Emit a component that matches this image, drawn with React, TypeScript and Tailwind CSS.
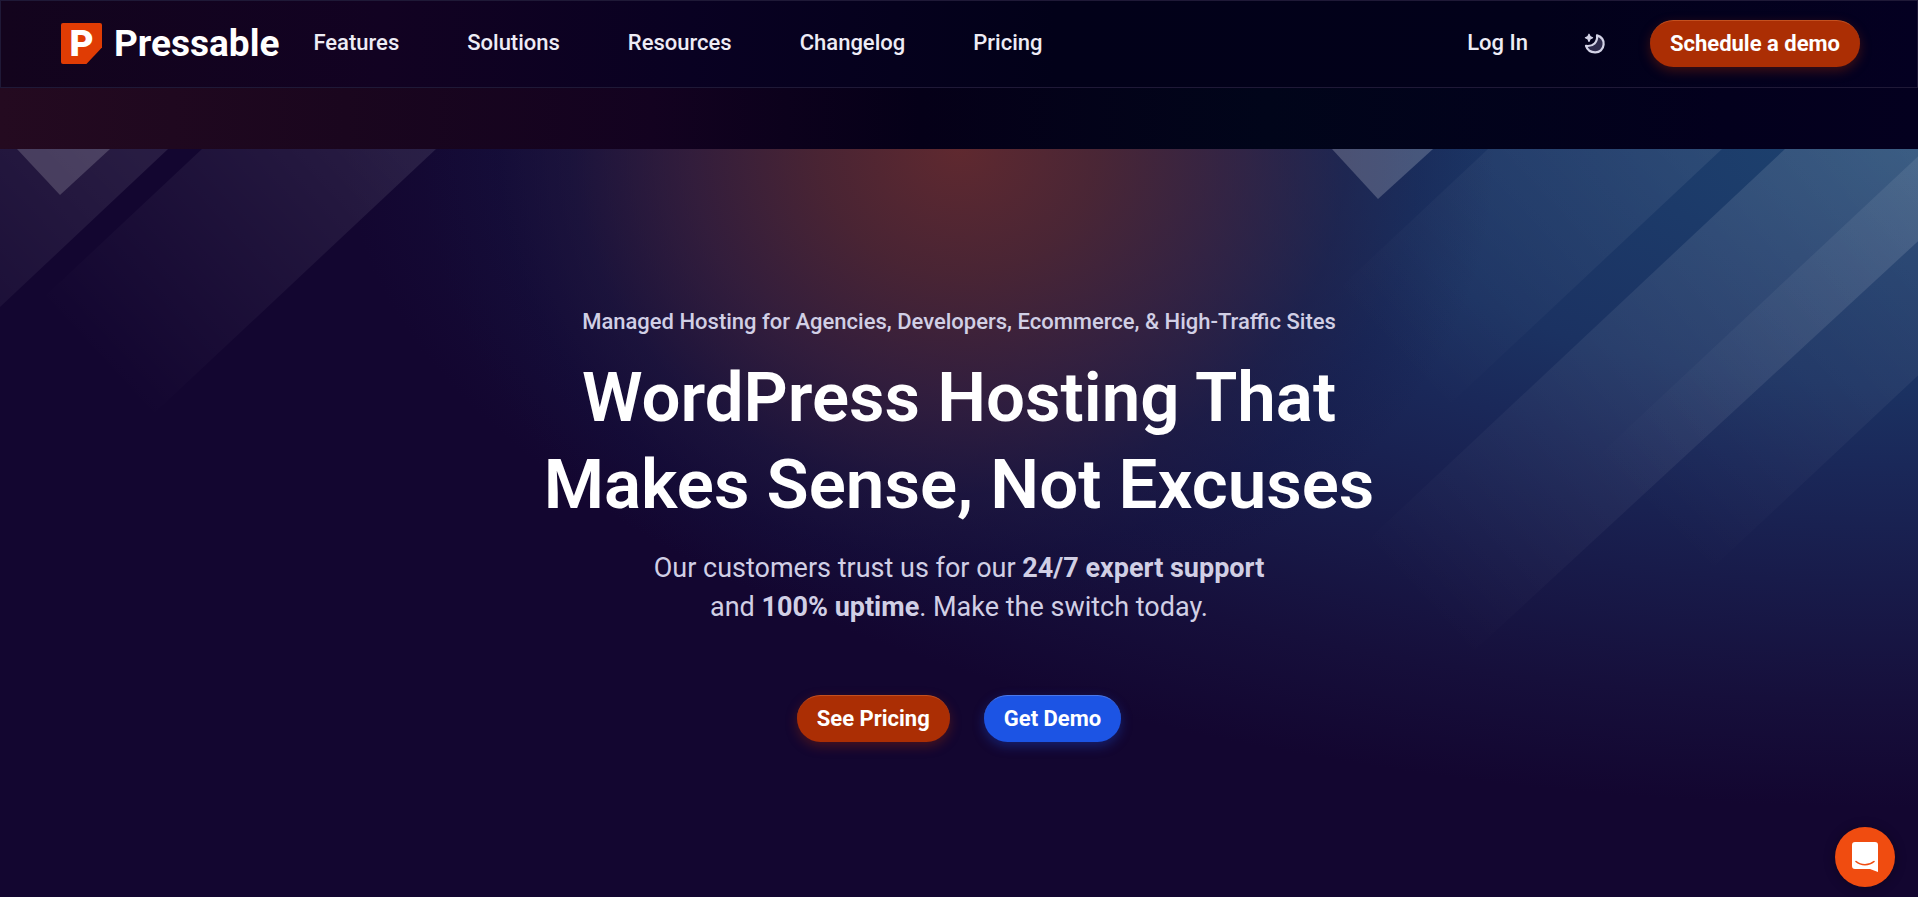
import type { ReactNode } from "react";

const NAV_ITEMS = ["Features", "Solutions", "Resources", "Changelog", "Pricing"];

const navLink = "text-[22px] leading-6 font-medium text-[#eeecf5] hover:text-white";

const pill =
  "inline-flex h-[47px] items-center rounded-full border-t px-5 pb-0.5 text-[22px] font-bold text-white transition hover:brightness-110";
const pillOrange =
  "border-[#c4501f] bg-[#ab2e04] shadow-[0_4px_12px_rgba(171,46,4,0.35)]";
const pillBlue =
  "border-[#4a78ea] bg-[#1c54e4] shadow-[0_4px_12px_rgba(28,84,228,0.35)]";

function PillLink({ blue, children }: { blue?: boolean; children: ReactNode }) {
  return (
    <a href="#" className={[pill, blue ? pillBlue : pillOrange].join(" ")}>
      {children}
    </a>
  );
}

function Logo() {
  return (
    <a href="#" className="flex items-center gap-3" aria-label="Pressable home">
      <span className="flex h-[41px] w-[41px] items-center justify-center rounded-xs bg-[#e03c04] text-[37px] leading-none font-black text-white [clip-path:polygon(0_0,100%_0,100%_60%,62%_100%,0_100%)]">
        P
      </span>
      <span className="text-[37px] leading-none font-bold text-white">Pressable</span>
    </a>
  );
}

function MoonIcon() {
  return (
    <svg viewBox="0 0 22 22" className="size-[22px]" aria-hidden>
      <path
        d="M13 2.4C17.4 3.8 20 7.4 19.6 11.6C19.2 16.4 15.6 19.6 11 19.4C6.6 19.2 3.2 16.6 2 12.9C9.4 13.8 13.8 9 13 2.4Z"
        fill="#2f2c4d"
        stroke="#d3d3e6"
        strokeWidth="2.2"
        strokeLinejoin="round"
      />
      <path
        d="M5 1.2L6.1 3.6L8.6 4.8L6.1 6L5 8.4L3.9 6L1.4 4.8L3.9 3.6Z"
        fill="#d3d3e6"
        stroke="#d3d3e6"
        strokeWidth="1.2"
        strokeLinejoin="round"
      />
    </svg>
  );
}

function Header() {
  return (
    <header className="flex h-[88px] items-center border border-[#1f1937] bg-[linear-gradient(90deg,#13041d_0%,#120222_20%,#090122_36%,#020119_55%,#02011a_80%,#040021_100%)] pr-[57px] pb-px pl-[60px]">
      <Logo />
      <nav className="ml-[34px] flex gap-[68px] pb-0.5" aria-label="Main">
        {NAV_ITEMS.map((item) => (
          <a key={item} href="#" className={navLink}>
            {item}
          </a>
        ))}
      </nav>
      <div className="ml-auto flex items-center">
        <a href="#" className={`${navLink} pb-0.5`}>
          Log In
        </a>
        <button type="button" className="mr-11 ml-14" aria-label="Toggle dark mode">
          <MoonIcon />
        </button>
        <PillLink>Schedule a demo</PillLink>
      </div>
    </header>
  );
}

/** Diagonal light beams behind the hero copy. */
function Beams() {
  return (
    <svg
      className="absolute inset-0 h-full w-full"
      viewBox="0 0 1918 748"
      preserveAspectRatio="xMidYMin slice"
      aria-hidden
    >
      <defs>
        <linearGradient id="beam-a" gradientUnits="userSpaceOnUse" x1="140" y1="0" x2="-80" y2="210">
          <stop offset="0" stopColor="#fff" stopOpacity="0.09" />
          <stop offset="1" stopColor="#fff" stopOpacity="0.02" />
        </linearGradient>
        <linearGradient id="beam-b" gradientUnits="userSpaceOnUse" x1="400" y1="0" x2="130" y2="250">
          <stop offset="0" stopColor="#fff" stopOpacity="0.09" />
          <stop offset="1" stopColor="#fff" stopOpacity="0" />
        </linearGradient>
        <linearGradient id="beam-c" gradientUnits="userSpaceOnUse" x1="1700" y1="0" x2="1430" y2="250">
          <stop offset="0" stopColor="#fff" stopOpacity="0.07" />
          <stop offset="1" stopColor="#fff" stopOpacity="0" />
        </linearGradient>
        <linearGradient id="beam-d" gradientUnits="userSpaceOnUse" x1="1960" y1="0" x2="1440" y2="480">
          <stop offset="0" stopColor="#fff" stopOpacity="0.14" />
          <stop offset="1" stopColor="#fff" stopOpacity="0" />
        </linearGradient>
        <linearGradient id="beam-e" gradientUnits="userSpaceOnUse" x1="1960" y1="60" x2="1650" y2="370">
          <stop offset="0" stopColor="#fff" stopOpacity="0.08" />
          <stop offset="1" stopColor="#fff" stopOpacity="0" />
        </linearGradient>
      </defs>
      <path d="M0 0H168L0 158Z" fill="url(#beam-a)" />
      <path d="M202 0H436L116 300H-118Z" fill="url(#beam-b)" />
      <path d="M17 0H110L60 46Z" fill="#fff" fillOpacity="0.17" />
      <path d="M1488 0H1722L1402 300H1168Z" fill="url(#beam-c)" />
      <path d="M1785 0H2018L1450 524H1226Z" fill="url(#beam-d)" />
      <path d="M1926 0H2160L1626 500H1392Z" fill="url(#beam-e)" />
      <path d="M1332 0H1433L1378 50Z" fill="#fff" fillOpacity="0.2" />
    </svg>
  );
}

function Hero() {
  return (
    <section className="relative flex flex-1 flex-col items-center overflow-hidden bg-[#130630] pt-[157px] text-center">
      <div className="absolute inset-0 bg-[radial-gradient(ellipse_82%_88%_at_100%_0%,#1d4470_0%,#1c3a69_18%,#1b3262_36%,#1a2859_48%,#181b4a_66%,#160f3b_84%,#130630_100%)]" />
      <div className="absolute inset-0 bg-[radial-gradient(ellipse_28%_64%_at_50%_0%,rgba(103,42,44,0.9)_0%,rgba(82,38,48,0.85)_26%,rgba(62,33,58,0.7)_50%,rgba(34,25,62,0.45)_72%,rgba(20,18,62,0.2)_86%,rgba(20,18,62,0)_100%)]" />
      <Beams />
      <div className="relative flex flex-col items-center">
        <p className="text-[22px] leading-8 font-medium text-[#d1cfe5]">
          Managed Hosting for Agencies, Developers, Ecommerce, &amp; High-Traffic Sites
        </p>
        <h1 className="mt-4 text-[69px] leading-[87px] font-semibold text-white">
          WordPress Hosting That
          <br />
          Makes Sense, Not Excuses
        </h1>
        <p className="mt-[21px] text-[27px] leading-[39px] text-[#d1cfe5]">
          Our customers trust us for our <strong className="font-bold">24/7 expert support</strong>
          <br />
          and <strong className="font-bold">100% uptime</strong>. Make the switch today.
        </p>
        <div className="mt-[68px] flex gap-[34px]">
          <PillLink>See Pricing</PillLink>
          <PillLink blue>Get Demo</PillLink>
        </div>
      </div>
    </section>
  );
}

function ChatLauncher() {
  return (
    <button
      type="button"
      aria-label="Open chat"
      className="fixed right-[23px] bottom-[10px] flex size-[60px] items-center justify-center rounded-full bg-[#f04c10] shadow-[0_1px_12px_rgba(0,0,0,0.3)]"
    >
      <svg viewBox="0 0 28 32" className="h-8 w-7" aria-hidden>
        <path
          d="M4 1H24A3 3 0 0 1 27 4V31L19 28H4A3 3 0 0 1 1 25V4A3 3 0 0 1 4 1Z"
          fill="#fff"
        />
        <path d="M5 20.5C10 24.8 18 24.8 23 20.5" fill="none" stroke="#f04c10" strokeWidth="1.6" strokeLinecap="round" />
      </svg>
    </button>
  );
}

export default function App() {
  return (
    <div className="flex min-h-dvh flex-col bg-[#0b0220] font-[Roboto,'Liberation_Sans',sans-serif]">
      <Header />
      <div className="h-[61px] bg-[linear-gradient(90deg,#240a20_0%,#1a061e_18%,#130220_34%,#050018_48%,#01051a_66%,#03001d_90%,#04001f_100%)]" />
      <Hero />
      <ChatLauncher />
    </div>
  );
}
